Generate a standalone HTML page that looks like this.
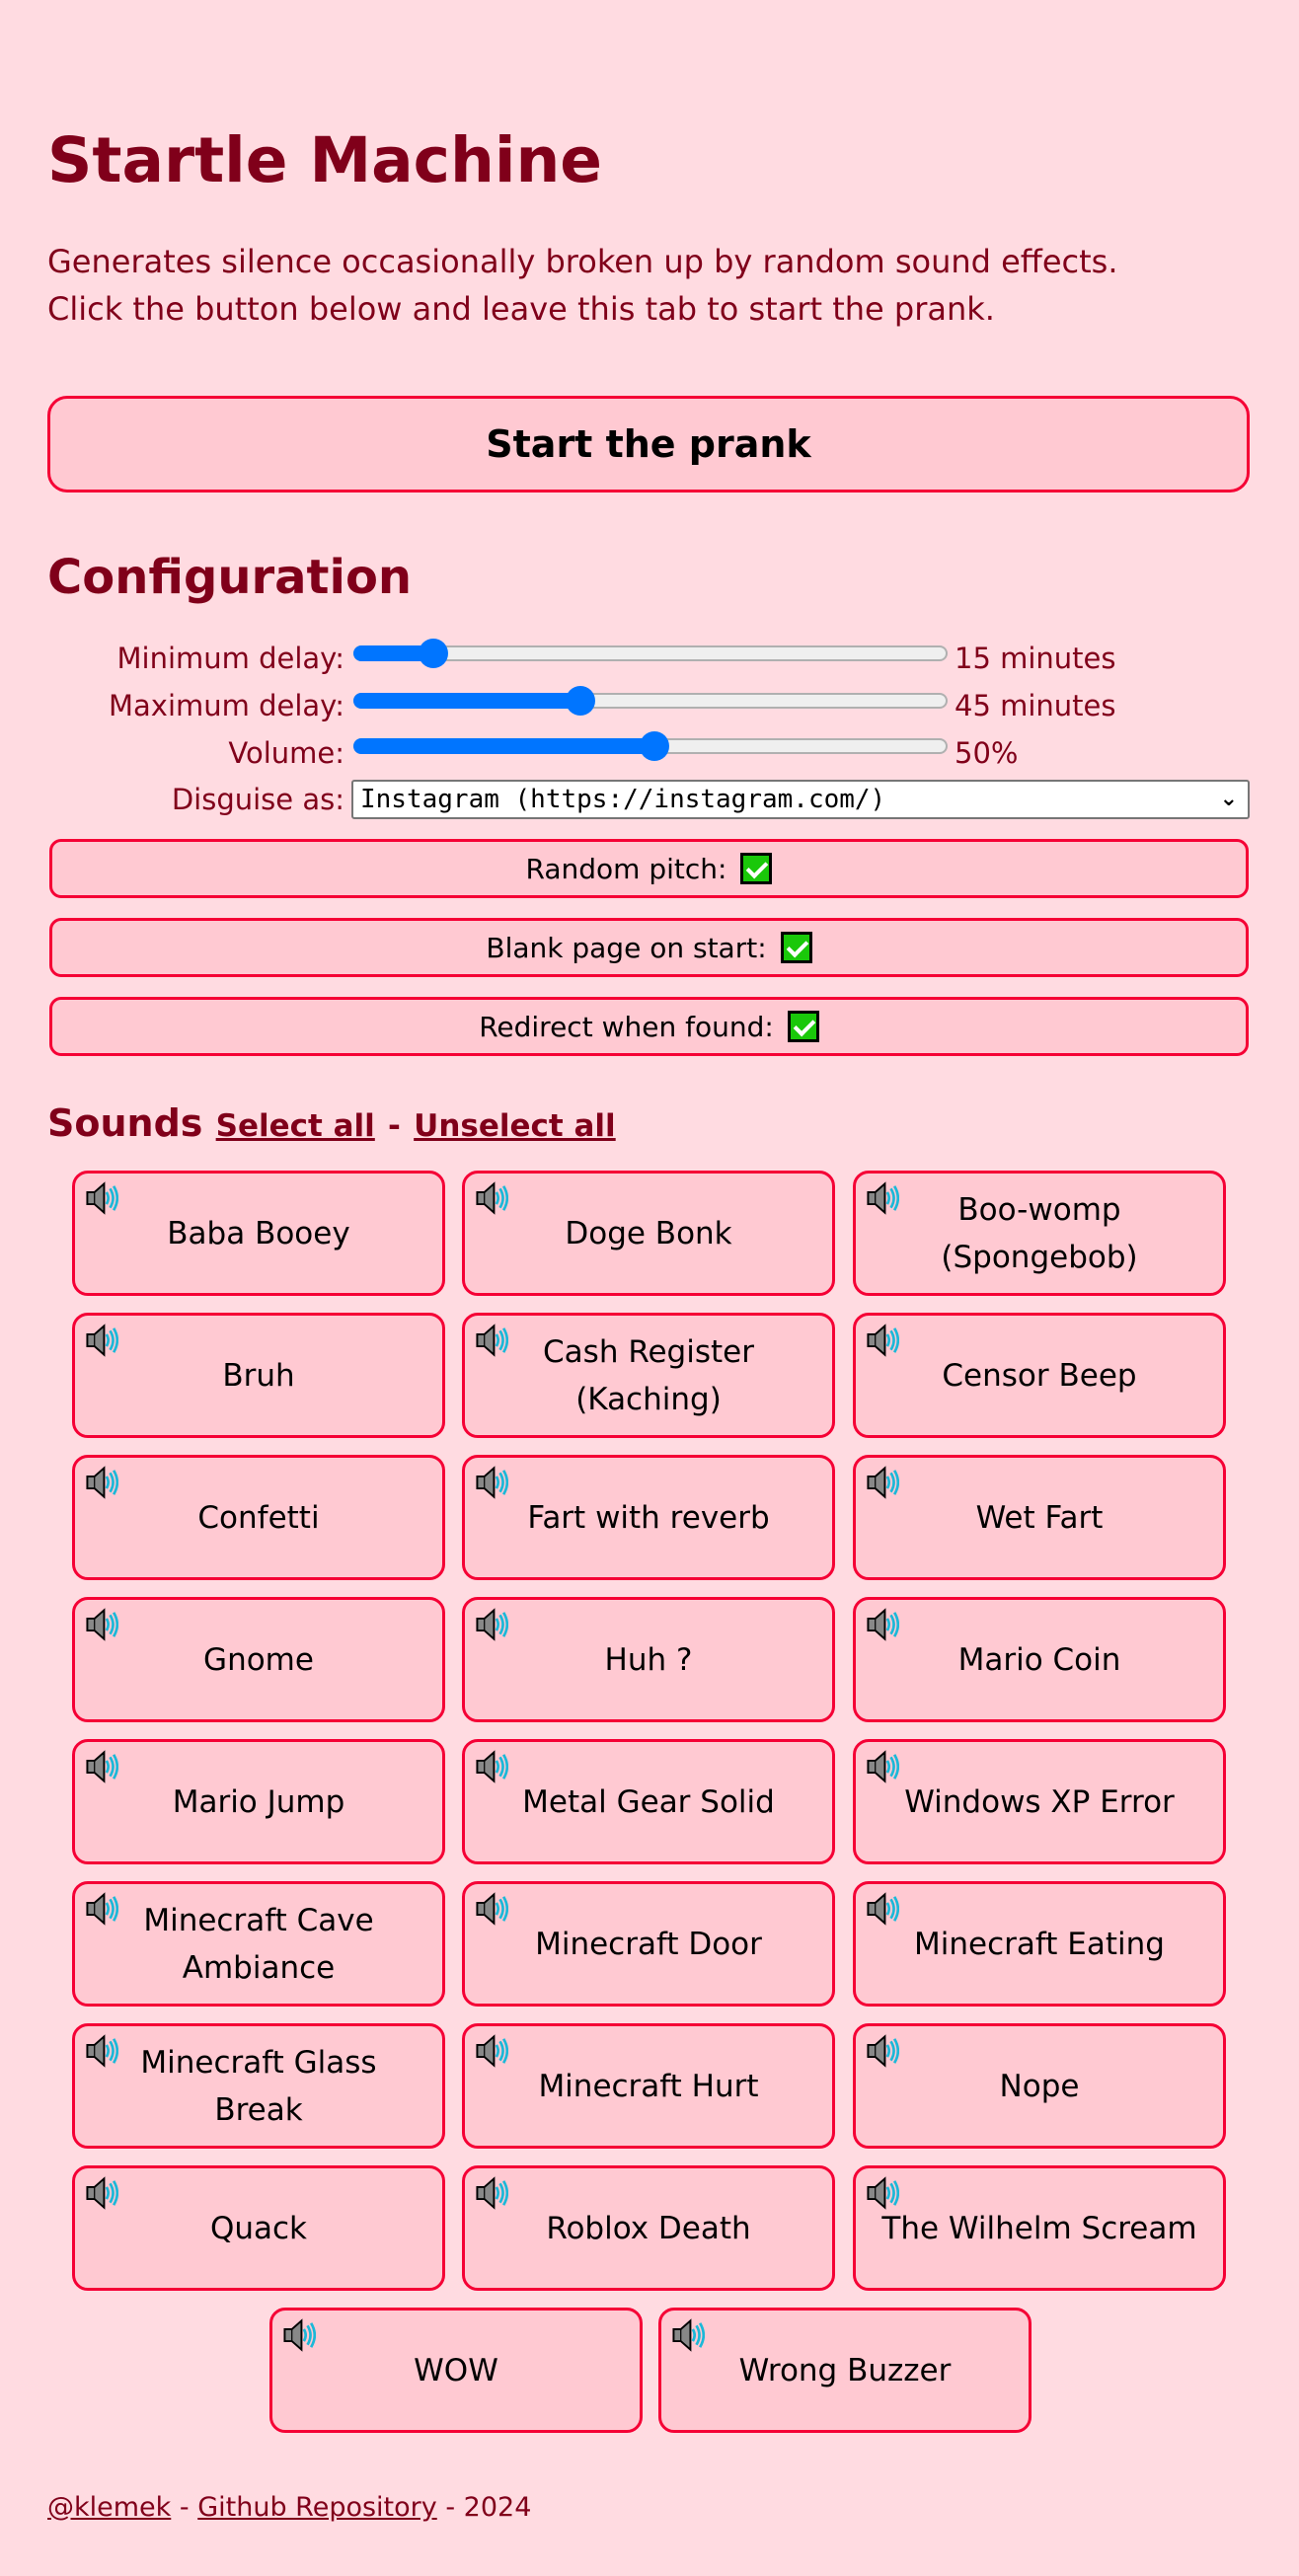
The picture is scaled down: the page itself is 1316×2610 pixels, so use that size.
<!DOCTYPE html>
<html><head><meta charset="utf-8"><style>
*{box-sizing:border-box;margin:0;padding:0}
body{width:1316px;height:2610px;background:#ffdbe1;font-family:"DejaVu Sans","Liberation Sans",sans-serif;color:#80001a;position:relative;overflow:hidden}
.a{position:absolute}
h1{position:absolute;left:48px;top:123px;font-size:63px;font-weight:bold;line-height:80px}
.desc{left:48px;top:241px;font-size:32px;line-height:48px}
.btn{left:48px;top:401px;width:1218px;height:98px;background:#ffc9d2;border:3px solid #f50035;border-radius:20px;color:#000;font-weight:bold;font-size:38px;display:flex;align-items:center;justify-content:center}
h2{position:absolute;left:48px;top:555px;font-size:48px;font-weight:bold;line-height:60px}
.lbl{right:967px;font-size:29px;line-height:36px;text-align:right}
.val{left:967px;font-size:29px;line-height:36px}
.sl{left:358px;width:602px;height:16px;border:2px solid #b0b0b0;background:#efefef;border-radius:8px}
.sl i{position:absolute;left:-2px;top:-2px;height:16px;background:#0075ff;border-radius:8px}
.sl b{position:absolute;top:-9px;width:30px;height:30px;border-radius:50%;background:#0075ff}
.sel{left:356px;top:790px;width:910px;height:40px;background:#fff;border:2px solid #767676;border-radius:3px;font-family:"DejaVu Sans Mono","Liberation Mono",monospace;font-size:26px;color:#000;line-height:36px;padding-left:7px}
.chk{left:50px;width:1215px;height:60px;background:#ffc9d2;border:3px solid #f50035;border-radius:12px;color:#000;font-size:28px;display:flex;align-items:center;justify-content:center}
.cb{display:inline-block;width:32px;height:32px;background:#1ac80a;border:3px solid #000;margin-left:14px;position:relative}
.cb:after{content:"";position:absolute;left:8px;top:2px;width:8px;height:16px;border:solid #fff;border-width:0 4px 4px 0;transform:rotate(45deg)}
.snd{position:absolute;width:378px;height:127px;background:#ffc9d2;border:3px solid #f50035;border-radius:16px;color:#000;font-size:31px;line-height:48px;display:flex;align-items:center;justify-content:center;text-align:center;padding:0 40px}
.snd .t{display:block}
.snd svg{position:absolute;left:10px;top:8px}
.foot{left:48px;top:2521px;font-size:27px;line-height:40px}
a{color:#80001a;text-decoration:underline}
</style></head><body>
<h1>Startle Machine</h1>
<div class="a desc">Generates silence occasionally broken up by random sound effects.<br>Click the button below and leave this tab to start the prank.</div>
<div class="a btn">Start the prank</div>
<h2>Configuration</h2>
<div class="a lbl" style="top:649px">Minimum delay:</div>
<div class="a sl" style="top:654px"><i style="width:80px"></i><b style="left:64px"></b></div>
<div class="a val" style="top:649px">15 minutes</div>
<div class="a lbl" style="top:697px">Maximum delay:</div>
<div class="a sl" style="top:702px"><i style="width:230px"></i><b style="left:213px"></b></div>
<div class="a val" style="top:697px">45 minutes</div>
<div class="a lbl" style="top:745px">Volume:</div>
<div class="a sl" style="top:748px"><i style="width:305px"></i><b style="left:288px"></b></div>
<div class="a val" style="top:745px">50%</div>
<div class="a lbl" style="top:792px">Disguise as:</div>
<div class="a sel">Instagram (https://instagram.com/)<span style="position:absolute;right:10px;top:0;font-family:'DejaVu Sans';font-weight:bold;font-size:22px">&#8964;</span></div>
<div class="a chk" style="top:850px">Random pitch:<span class="cb"></span></div>
<div class="a chk" style="top:930px">Blank page on start:<span class="cb"></span></div>
<div class="a chk" style="top:1010px">Redirect when found:<span class="cb"></span></div>
<div class="a" style="left:48px;top:1115px;font-size:38px;font-weight:bold;line-height:46px">Sounds <a style="font-size:31px">Select all</a> <span style="font-size:31px">-</span> <a style="font-size:31px">Unselect all</a></div>
<svg width="0" height="0" style="position:absolute"><defs><g id="spk"><path d="M2 9h6l8-7v24l-8-7H2z" fill="#888" stroke="#000" stroke-width="1.6"/><path d="M8 9v10" stroke="#000" stroke-width="1"/><path d="M18 9q3 5 0 10M21 6q5 8 0 16M24 4q6 10 0 20" fill="none" stroke="#1bb8d8" stroke-width="2.2"/></g></defs></svg>
<div id="grid"></div>
<script>
var n=["Baba Booey","Doge Bonk","Boo-womp (Spongebob)","Bruh","Cash Register (Kaching)","Censor Beep","Confetti","Fart with reverb","Wet Fart","Gnome","Huh ?","Mario Coin","Mario Jump","Metal Gear Solid","Windows XP Error","Minecraft Cave Ambiance","Minecraft Door","Minecraft Eating","Minecraft Glass Break","Minecraft Hurt","Nope","Quack","Roblox Death","The Wilhelm Scream","WOW","Wrong Buzzer"];
var xs=[73,468,864],h="";
n.forEach(function(t,i){var r=Math.floor(i/3),c=i%3,x=xs[c],y=1186+r*144;
if(i>=24){x=[273,667][i-24];}
var pad=(t=="The Wilhelm Scream")?'padding:0 4px;':'';
h+='<div class="snd" style="left:'+x+'px;top:'+y+'px;'+pad+'"><svg width="34" height="34" viewBox="0 0 28 28"><use href="#spk"/></svg><span class="t">'+t+'</span></div>';});
document.getElementById('grid').innerHTML=h;
</script>
<div class="a foot"><a>@klemek</a> - <a>Github Repository</a> - 2024</div>
</body></html>
